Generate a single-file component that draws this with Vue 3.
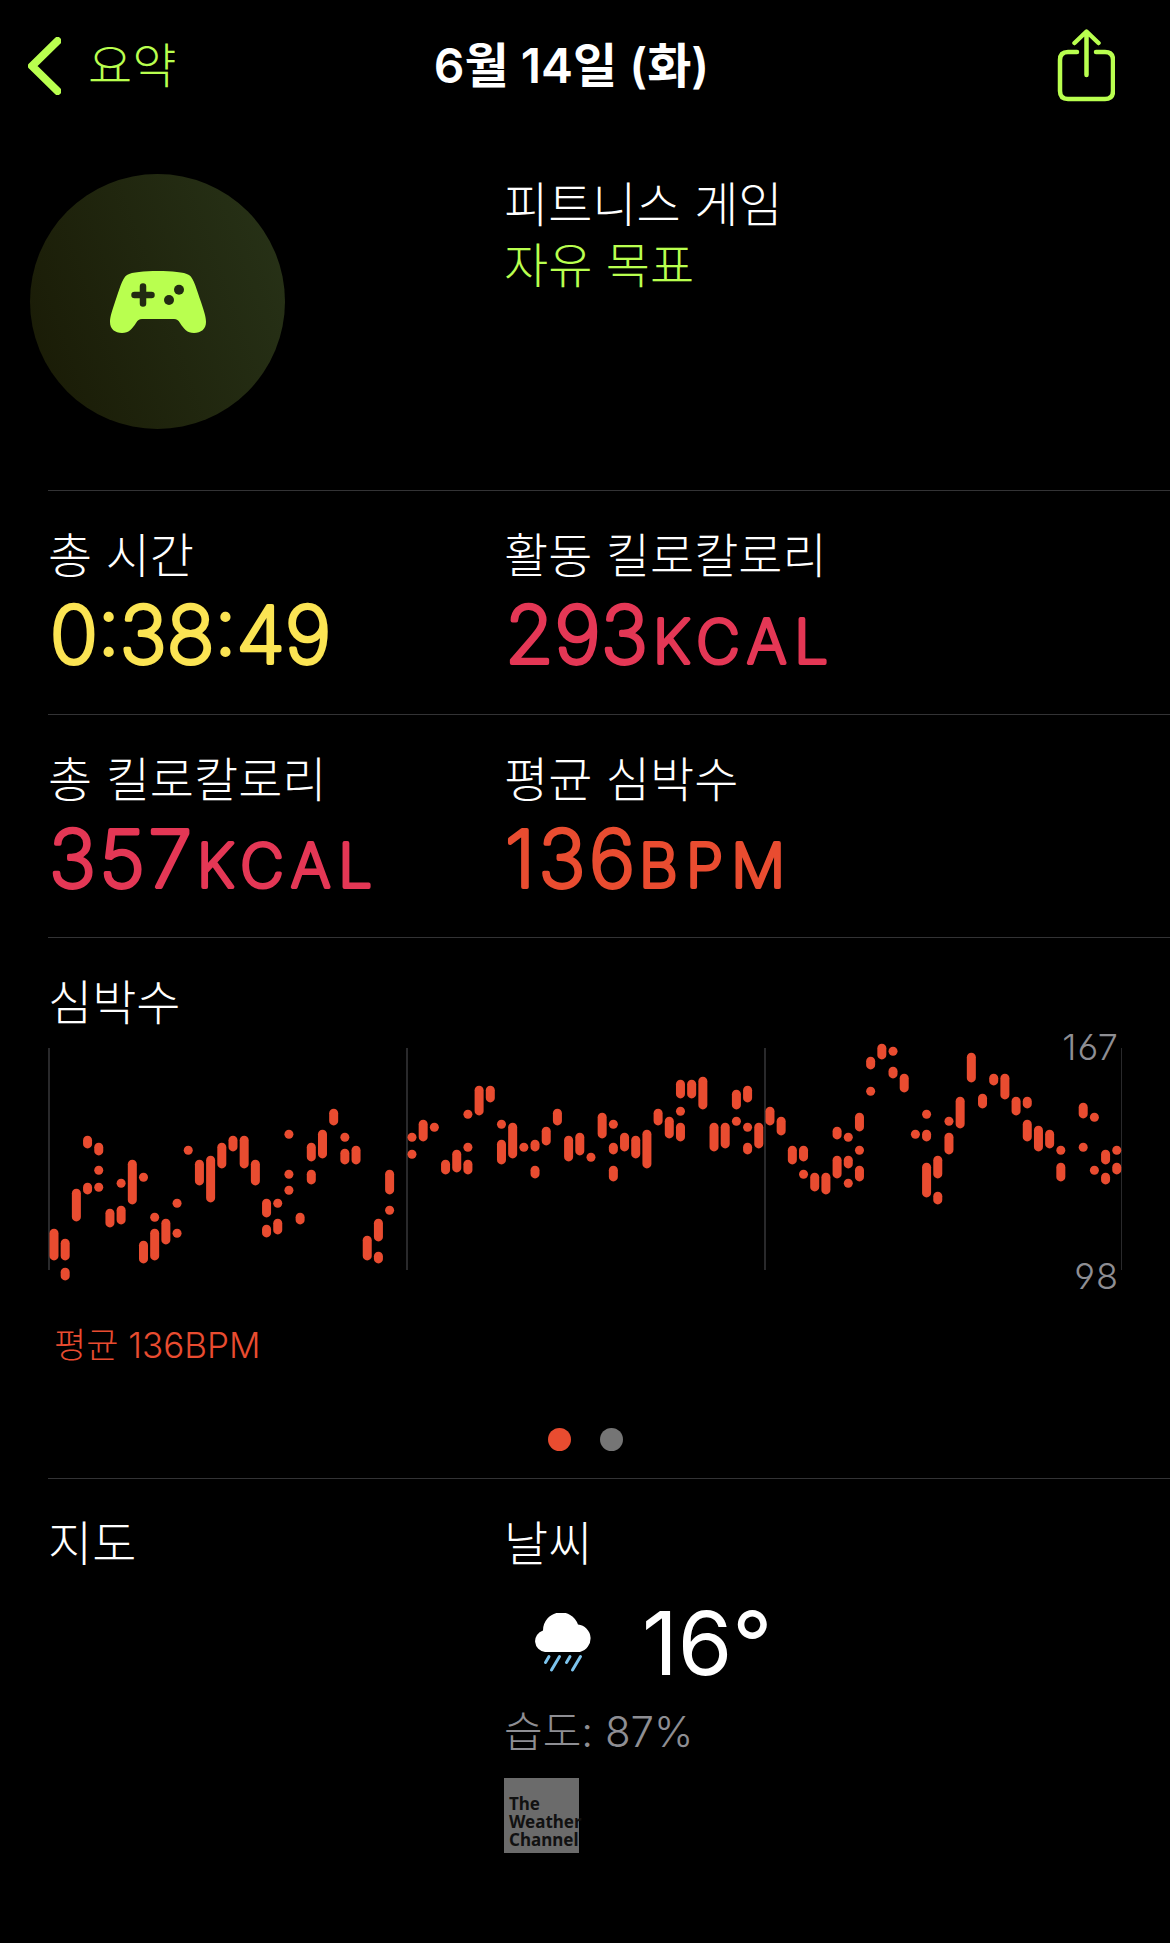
<!--
 Workout summary page
-->
<script setup>
// Heart rate samples: one entry per time slot, each holding [top, bottom] ranges
const samples = [
  [[199, 230]],
  [[209, 230], [238, 250]],
  [[159, 191]],
  [[106, 118], [153, 164]],
  [[113, 125], [136, 144], [153, 161]],
  [[179, 197]],
  [[149, 157], [176, 194]],
  [[130, 174]],
  [[143, 151], [211, 233]],
  [[183, 191], [199, 230]],
  [[189, 214]],
  [[169, 177], [199, 207]],
  [[116, 124]],
  [[130, 155]],
  [[126, 172]],
  [[113, 138]],
  [[106, 121]],
  [[106, 138]],
  [[130, 155]],
  [[169, 187], [195, 207]],
  [[169, 177], [189, 204]],
  [[100, 108], [140, 148], [156, 164]],
  [[183, 194]],
  [[113, 131], [140, 154]],
  [[100, 128]],
  [[79, 95]],
  [[103, 111], [119, 134]],
  [[116, 134]],
  [[206, 230]],
  [[189, 211], [222, 233]],
  [[140, 164], [176, 184]],
  [],
  [[103, 111], [120, 128]],
  [[90, 111]],
  [[93, 101]],
  [[130, 144]],
  [[120, 142]],
  [[80, 88], [113, 121], [130, 144]],
  [[56, 85]],
  [[56, 72]],
  [[90, 98], [110, 134]],
  [[93, 128]],
  [[113, 121]],
  [[110, 121], [136, 148]],
  [[97, 115]],
  [[79, 95]],
  [[106, 131]],
  [[103, 125]],
  [[123, 131]],
  [[83, 108]],
  [[90, 98], [113, 124], [136, 151]],
  [[103, 121]],
  [[106, 128]],
  [[100, 138]],
  [[79, 95]],
  [[87, 108]],
  [[50, 68], [77, 85], [93, 111]],
  [[50, 68]],
  [[47, 79]],
  [[93, 121]],
  [[93, 118]],
  [[60, 79], [87, 95]],
  [[56, 72], [93, 101], [113, 124]],
  [[93, 118]],
  [[77, 95]],
  [[87, 105]],
  [[116, 134]],
  [[116, 131], [140, 148]],
  [[143, 161]],
  [[143, 164]],
  [[97, 109], [126, 148]],
  [[103, 111], [126, 138], [149, 157]],
  [[83, 101], [116, 124], [136, 151]],
  [[27, 39], [57, 65]],
  [[14, 29]],
  [[17, 25], [37, 48]],
  [[44, 62]],
  [[100, 108]],
  [[80, 88], [100, 111], [133, 167]],
  [[126, 148], [162, 174]],
  [[87, 95], [103, 124]],
  [[67, 98]],
  [[23, 52]],
  [[64, 78]],
  [[44, 55]],
  [[44, 69]],
  [[67, 85]],
  [[67, 78], [90, 111]],
  [[96, 121]],
  [[100, 118]],
  [[116, 124], [133, 151]],
  [],
  [[73, 88], [113, 121]],
  [[83, 91], [136, 144]],
  [[120, 134], [143, 154]],
  [[116, 124], [133, 144]],
]

// Flatten the slots into drawable bars
const bars = samples.flatMap((ranges, i) =>
  ranges.map(([top, bottom]) => ({
    x: 49.5 + i * 11.187,
    y: top - 0.2,
    height: Math.max(9, bottom - top + 0.6),
  })),
)
</script>

<template>
  <div class="page">
    <header class="nav">
      <button class="back">
        <svg width="33" height="58" viewBox="0 0 33 58">
          <path d="M29.5 4 L4 29 L29.5 54" />
        </svg>
        <span>요약</span>
      </button>
      <h1>6월 14일 (화)</h1>
      <button class="share">
        <svg width="58" height="74" viewBox="0 0 58 74">
          <path d="M20 23 H11 Q3 23 3 31 V62 Q3 70 11 70 H48 Q56 70 56 62 V31 Q56 23 48 23 H39" />
          <path d="M29.5 46 V3 M17.5 14 L29.5 2.5 L41.5 14" />
        </svg>
      </button>
    </header>

    <section class="workout">
      <div class="badge">
        <svg width="96" height="62" viewBox="0 0 96 62">
          <path
            class="pad"
            d="M48 0C62 0 74 1 79 4C84 7 87 20 91 31C94 40 96 46 96 51C96 58 91 62 84 62C77 62 74 58 70 52C68 49 67 48 64 48H32C29 48 28 49 26 52C22 58 19 62 12 62C5 62 0 58 0 51C0 46 2 40 5 31C9 20 12 7 17 4C22 1 34 0 48 0Z"
          />
          <path class="cross" d="M24.5 24H41.5M33 15.500V32.500" />
          <circle cx="69" cy="18.800" r="5" />
          <circle cx="59" cy="29" r="5" />
        </svg>
      </div>
      <div class="workout-info">
        <p>피트니스 게임</p>
        <p class="goal">자유 목표</p>
      </div>
    </section>

    <section class="row">
      <div class="stat">
        <p class="label">총 시간</p>
        <svg class="value time" width="400" height="90">
          <text x="2" y="72.500" textLength="281">0:38:49</text>
        </svg>
      </div>
      <div class="stat">
        <p class="label">활동 킬로칼로리</p>
        <svg class="value kcal" width="400" height="90">
          <text x="1" y="72.500" textLength="143">293</text>
          <text class="unit" x="149" y="72.500" textLength="175">KCAL</text>
        </svg>
      </div>
    </section>

    <section class="row">
      <div class="stat">
        <p class="label">총 킬로칼로리</p>
        <svg class="value kcal" width="400" height="90">
          <text x="1" y="72.500" textLength="143">357</text>
          <text class="unit" x="149" y="72.500" textLength="175">KCAL</text>
        </svg>
      </div>
      <div class="stat">
        <p class="label">평균 심박수</p>
        <svg class="value bpm" width="400" height="90">
          <text x="1" y="72.500" textLength="130">136</text>
          <text class="unit" x="135" y="72.500" textLength="146">BPM</text>
        </svg>
      </div>
    </section>

    <section class="heart">
      <p class="label">심박수</p>
      <svg class="chart" width="1122" height="270" viewBox="48 0 1122 270">
        <g class="grid">
          <rect x="48" y="18" width="2" height="222" />
          <rect x="406" y="18" width="2" height="222" />
          <rect x="764" y="18" width="2" height="222" />
          <rect x="1121" y="18" width="1" height="222" />
        </g>
        <rect
          v-for="(bar, i) in bars"
          :key="i"
          class="bar"
          :x="bar.x"
          :y="bar.y"
          width="9"
          :height="bar.height"
          rx="4.5"
        />
        <text x="1119" y="30" text-anchor="end">167</text>
        <text x="1119" y="259" text-anchor="end">98</text>
      </svg>
      <p class="average">평균 136BPM</p>
      <div class="dots">
        <span class="dot active"></span>
        <span class="dot"></span>
      </div>
    </section>

    <section class="row last">
      <div class="stat">
        <p class="label">지도</p>
      </div>
      <div class="stat">
        <p class="label">날씨</p>
        <div class="weather">
          <svg width="60" height="60" viewBox="0 0 60 60">
            <path
              class="cloud"
              d="M11 39A11 11 0 0 1 9 17.500A18 18 0 0 1 44 11.500A14 14 0 0 1 46 39Z"
            />
            <path class="rain" d="M15 43.500L11.500 49.500M25.500 43.500L17.500 57M36 43.500L32.500 49.500M46.500 43.500L38.500 57" />
          </svg>
          <span class="degrees">16°</span>
        </div>
        <p class="humidity">습도: 87%</p>
        <div class="channel">
          <span>The</span>
          <span>Weather</span>
          <span>Channel</span>
        </div>
      </div>
    </section>
  </div>
</template>

<style>
body {
  margin: 0;
  background: #000000;
}
</style>

<style scoped>
.page {
  width: 1170px;
  height: 1943px;
  overflow: hidden;
  background: #000000;
  color: #ffffff;
  font-family: Inter, 'Noto Sans CJK KR', sans-serif;
}
p,
h1 {
  margin: 0;
  white-space: nowrap;
}
svg {
  display: block;
}
button {
  background: none;
  border: none;
  padding: 0;
  font-family: inherit;
  color: #b9ff4f;
}
/* top bar */
.nav {
  display: grid;
  grid-template-columns: 1fr auto 1fr;
  align-items: center;
  height: 131px;
  padding: 0 55px 0 28px;
  box-sizing: border-box;
}
.nav h1 {
  font-size: 48px;
  font-weight: 600;
  line-height: 60px;
}
.back {
  display: flex;
  align-items: center;
  gap: 27px;
  font-size: 48px;
  font-weight: 300;
  line-height: 60px;
}
.back path {
  fill: none;
  stroke: #b9ff4f;
  stroke-width: 8;
  stroke-linecap: round;
  stroke-linejoin: round;
}
.share {
  justify-self: end;
}
.share path {
  fill: none;
  stroke: #b9ff4f;
  stroke-width: 4.5;
  stroke-linecap: round;
  stroke-linejoin: round;
}
/* workout type */
.workout {
  display: grid;
  grid-template-columns: 474px 1fr;
  height: 359px;
  padding: 43px 0 0 30px;
  box-sizing: border-box;
}
.badge {
  display: flex;
  align-items: center;
  justify-content: center;
  width: 255px;
  height: 255px;
  border-radius: 50%;
  background: linear-gradient(70deg, #191a05, #283318);
}
.pad {
  fill: #b9ff4f;
}
.badge circle {
  fill: #222a12;
}
.cross {
  fill: none;
  stroke: #222a12;
  stroke-width: 6.5;
  stroke-linecap: round;
}
.workout-info {
  font-size: 48px;
  font-weight: 300;
  line-height: 61px;
}
.goal {
  color: #b9ff4f;
}
/* stat rows */
.row {
  display: grid;
  grid-template-columns: 456px 1fr;
  height: 223.5px;
  margin-left: 48px;
  padding-top: 35px;
  box-sizing: border-box;
  border-top: 1px solid #333335;
}
.label {
  font-size: 48px;
  font-weight: 300;
  line-height: 60px;
}
.value {
  margin-top: 4px;
  font-size: 79px;
  font-weight: 200;
  stroke-width: 4;
  stroke-linejoin: round;
}
.unit {
  font-size: 60px;
}
.time {
  fill: #fbe453;
  stroke: #fbe453;
}
.kcal {
  fill: #e43755;
  stroke: #e43755;
}
.bpm {
  fill: #e94c30;
  stroke: #e94c30;
}
/* heart rate chart */
.heart {
  height: 541px;
  margin-left: 48px;
  padding-top: 35px;
  box-sizing: border-box;
  border-top: 1px solid #333335;
}
.chart {
  margin-top: -3px;
}
.grid rect {
  fill: #29292b;
}
.bar {
  fill: #e94c30;
}
.chart text {
  fill: #8e8e93;
  font-size: 36px;
  font-weight: 300;
  letter-spacing: 1px;
  font-feature-settings: 'cv03', 'cv04';
}
.average {
  margin: 22px 0 0 6px;
  font-size: 35px;
  font-weight: 300;
  line-height: 46px;
  color: #e94c30;
}
.dots {
  display: flex;
  gap: 29px;
  margin: 60px 0 0 500px;
}
.dot {
  width: 23px;
  height: 23px;
  border-radius: 50%;
  background: #757575;
}
.dot.active {
  background: #e94c30;
}
/* map and weather */
.last {
  height: 465px;
}
.weather {
  display: flex;
  align-items: center;
  height: 105px;
  margin-top: 16px;
  padding-left: 30px;
}
.cloud {
  fill: #ffffff;
}
.rain {
  fill: none;
  stroke: #7cc4ee;
  stroke-width: 3;
  stroke-linecap: round;
}
.degrees {
  margin-left: 48px;
  font-size: 88px;
  line-height: 100px;
}
.humidity {
  margin-top: 10px;
  font-size: 42px;
  font-weight: 300;
  line-height: 54px;
  color: #8e8e93;
}
.channel {
  display: flex;
  flex-direction: column;
  width: 75px;
  height: 75px;
  margin-top: 19px;
  padding: 17px 0 0 5px;
  box-sizing: border-box;
  background: #6b6b6b;
  color: #111111;
  font-family: 'Noto Sans', sans-serif;
  font-size: 17px;
  font-weight: 700;
  line-height: 18px;
}
</style>
